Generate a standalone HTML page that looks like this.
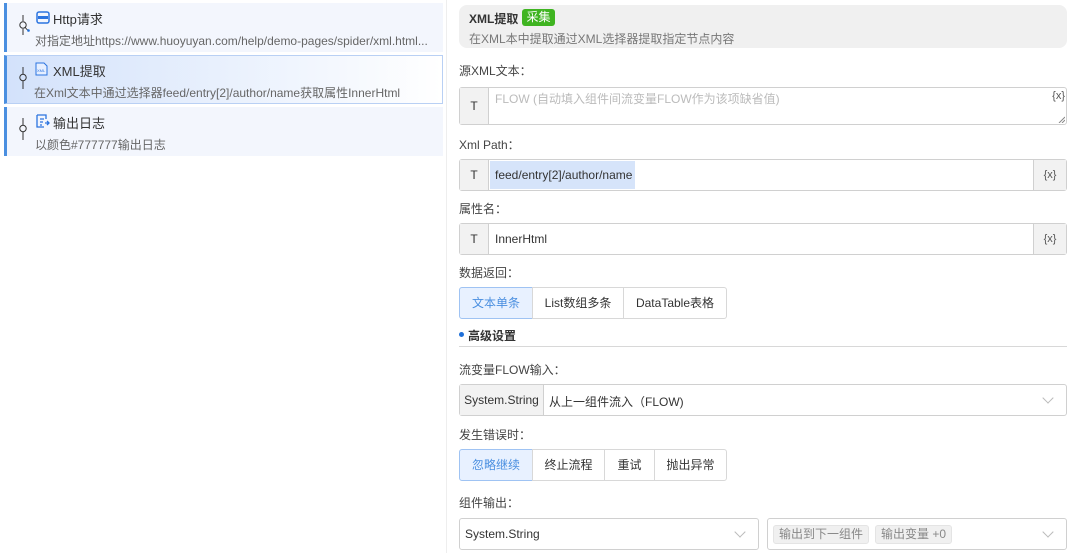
<!DOCTYPE html>
<html><head><meta charset="utf-8"><style>
*{box-sizing:border-box;margin:0;padding:0}
body{width:1070px;height:553px;overflow:hidden;background:#fff;font-family:"Liberation Sans","Noto Sans CJK SC",sans-serif;font-size:12px;color:#333;position:relative}
.a{position:absolute}
.item{position:absolute;left:4px;width:439px;height:49px;background:#f3f6fd;border-left:3px solid #4a8fe0}
.item .t{position:absolute;left:46px;top:6px;font-size:13px;color:#333}
.item .d{position:absolute;left:28px;top:29px;color:#666;white-space:nowrap}
.lbl{position:absolute;left:459px;color:#444;font-size:12px}
.box{position:absolute;left:459px;width:608px;border:1px solid #d0d0d0;border-radius:3px;background:#fff}
.T{position:absolute;left:0;top:0;bottom:0;width:29px;background:#f2f2f2;border-right:1px solid #d0d0d0;text-align:center;color:#333}
.vx{position:absolute;right:0;top:0;bottom:0;width:33px;background:#f2f2f2;border-left:1px solid #d0d0d0;text-align:center;color:#555;font-size:11px}
.grp{position:absolute;left:459px;height:32px;display:flex}
.grp div{border:1px solid #d8d8d8;margin-left:-1px;line-height:30px;text-align:center;color:#333;font-size:12px}
.grp div:first-child{margin-left:0;border-radius:3px 0 0 3px;background:#e8f1ff;color:#4a8fe0;border-color:#9fc3f3}
.grp div:last-child{border-radius:0 3px 3px 0}
.chev{position:absolute;width:8px;height:8px;border-right:1px solid #bbb;border-bottom:1px solid #bbb;transform:rotate(45deg)}
</style></head><body>
<div class="a" style="left:446px;top:0;width:1px;height:553px;background:#eee"></div>

<div class="item" style="top:3px">
<svg class="a" style="left:11px;top:12px" width="14" height="20" viewBox="0 0 14 20"><path d="M5 0V6M5 14V20" stroke="#333" fill="none"/><circle cx="5" cy="10" r="3.2" stroke="#333" fill="none"/><path d="M7 12Q9 15 10 15" stroke="#333" fill="none"/><circle cx="10.5" cy="15.5" r="1.3" fill="#1e6fd9"/></svg>
<svg class="a" style="left:29px;top:8px" width="14" height="13" viewBox="0 0 14 13"><rect x="1" y="1" width="12" height="11" rx="2" fill="none" stroke="#2b74e0" stroke-width="1.5"/><rect x="2" y="5" width="10" height="3" fill="#2b74e0"/></svg>
<div class="t">Http请求</div><div class="d">对指定地址https://www.huoyuyan.com/help/demo-pages/spider/xml.html...</div></div>

<div class="item" style="top:55px;background:linear-gradient(90deg,#d3e2fb,#fff);border:1px solid #b9d0f4;border-left:3px solid #4a8fe0">
<svg class="a" style="left:11px;top:11px" width="10" height="22" viewBox="0 0 10 22"><path d="M5 0V7M5 14V22" stroke="#333" fill="none"/><circle cx="5" cy="10.5" r="3.2" stroke="#333" fill="none"/></svg>
<svg class="a" style="left:28px;top:6px" width="13" height="14" viewBox="0 0 13 14"><path d="M1 1H9L12 4V13H1Z" fill="#e6efff" stroke="#2b74e0"/><text x="2" y="10" font-size="4" fill="#2b74e0">XML</text></svg>
<div class="t" style="top:5px">XML提取</div><div class="d" style="top:28px;left:27px">在Xml文本中通过选择器feed/entry[2]/author/name获取属性InnerHtml</div></div>

<div class="item" style="top:107px">
<svg class="a" style="left:11px;top:11px" width="10" height="22" viewBox="0 0 10 22"><path d="M5 0V7M5 14V22" stroke="#333" fill="none"/><circle cx="5" cy="10.5" r="3.2" stroke="#333" fill="none"/></svg>
<svg class="a" style="left:29px;top:7px" width="14" height="14" viewBox="0 0 14 14"><path d="M1 1H10V5M1 1V13H8M4 5H8M4 8H7M4 11H6M9 9H13M11 7L13 9L11 11" fill="none" stroke="#2b74e0" stroke-width="1.3"/></svg>
<div class="t">输出日志</div><div class="d">以颜色#777777输出日志</div></div>

<div class="a" style="left:459px;top:5px;width:608px;height:43px;background:#f0f0f0;border-radius:8px"></div>
<div class="a" style="left:469px;top:10px;font-weight:bold;font-size:12px;color:#333">XML提取</div>
<div class="a" style="left:522px;top:9px;width:33px;height:17px;background:#3fb421;color:#fff;border-radius:3px;text-align:center;line-height:17px;font-size:12px">采集</div>
<div class="a" style="left:469px;top:30px;color:#777">在XML本中提取通过XML选择器提取指定节点内容</div>

<div class="lbl" style="top:62px">源XML文本：</div>
<div class="box" style="top:87px;height:38px"><div class="T" style="line-height:36px">T</div>
<div class="a" style="left:35px;top:2px;color:#bbb">FLOW (自动填入组件间流变量FLOW作为该项缺省值)</div>
<div class="a" style="right:1px;top:2px;font-size:11px;color:#555">{x}</div>
<svg class="a" style="right:1px;bottom:1px" width="7" height="7"><path d="M1 7L7 1M4 7L7 4" stroke="#888"/></svg></div>

<div class="lbl" style="top:136px">Xml Path：</div>
<div class="box" style="top:159px;height:32px"><div class="T" style="line-height:30px">T</div>
<div class="a" style="left:30px;top:1px;width:145px;height:28px;background:#d6e4fa"></div>
<div class="a" style="left:35px;top:8px;color:#333">feed/entry[2]/author/name</div>
<div class="vx" style="line-height:30px">{x}</div></div>

<div class="lbl" style="top:200px">属性名：</div>
<div class="box" style="top:223px;height:32px"><div class="T" style="line-height:30px">T</div>
<div class="a" style="left:35px;top:8px;color:#333">InnerHtml</div>
<div class="vx" style="line-height:30px">{x}</div></div>

<div class="lbl" style="top:264px">数据返回：</div>
<div class="grp" style="top:287px"><div style="width:74px">文本单条</div><div style="width:92px">List数组多条</div><div style="width:104px">DataTable表格</div></div>

<div class="a" style="left:459px;top:332px;width:5px;height:5px;border-radius:50%;background:#1e6fd9"></div>
<div class="a" style="left:468px;top:327px;font-weight:bold;color:#333">高级设置</div>
<div class="a" style="left:459px;top:346px;width:608px;height:1px;background:#d8d8d8"></div>

<div class="lbl" style="top:361px">流变量FLOW输入：</div>
<div class="box" style="top:384px;height:32px"><div class="T" style="width:84px;line-height:30px">System.String</div>
<div class="a" style="left:89px;top:8px">从上一组件流入（FLOW)</div><div class="chev" style="right:14px;top:9px"></div></div>

<div class="lbl" style="top:426px">发生错误时：</div>
<div class="grp" style="top:449px"><div style="width:74px">忽略继续</div><div style="width:73px">终止流程</div><div style="width:51px">重试</div><div style="width:73px">抛出异常</div></div>

<div class="lbl" style="top:494px">组件输出：</div>
<div class="box" style="top:518px;height:32px;width:300px"><div class="a" style="left:5px;top:8px">System.String</div><div class="chev" style="right:14px;top:9px"></div></div>
<div class="box" style="top:518px;height:32px;left:767px;width:300px">
<div class="a" style="left:5px;top:6px;height:19px;padding:0 5px;background:#f0f0f0;border:1px solid #e4e4e4;border-radius:3px;line-height:17px;color:#888">输出到下一组件</div>
<div class="a" style="left:107px;top:6px;height:19px;padding:0 5px;background:#f0f0f0;border:1px solid #e4e4e4;border-radius:3px;line-height:17px;color:#888">输出变量 +0</div>
<div class="chev" style="right:14px;top:9px"></div></div>
</body></html>
